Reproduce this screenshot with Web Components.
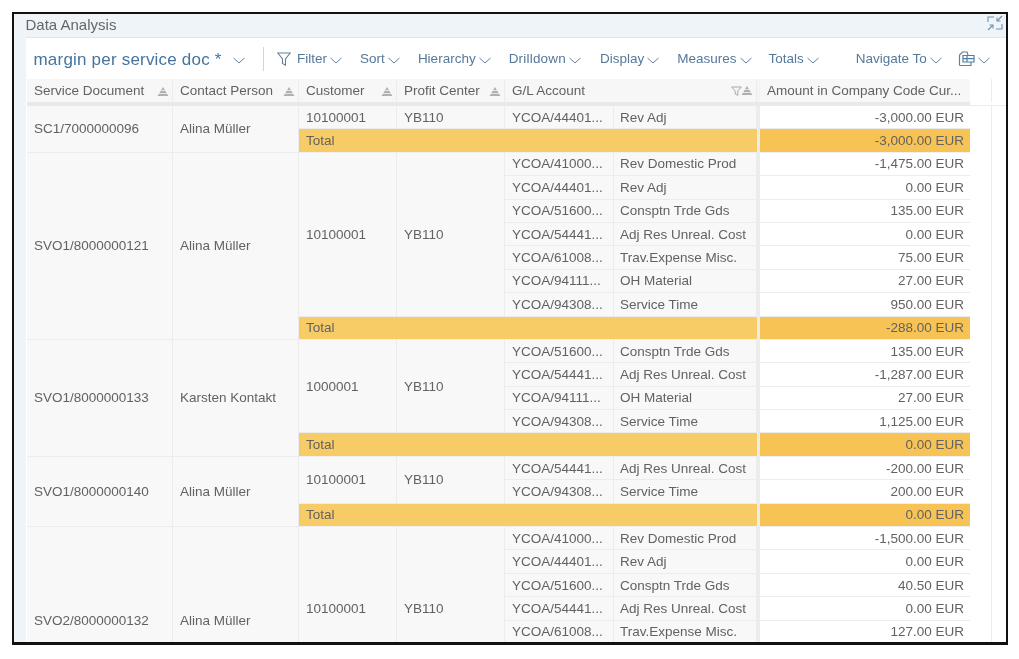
<!DOCTYPE html>
<html>
<head>
<meta charset="utf-8">
<title>Data Analysis</title>
<style>
  html, body { margin: 0; height: 100%; background: #fff; }
  body { font-family: "Liberation Sans", Arial, sans-serif; }
</style>
</head>
<body>
<analysis-frame>
  <panel-title slot="title">Data Analysis</panel-title>
  <analysis-toolbar slot="toolbar"></analysis-toolbar>
  <data-grid slot="content"></data-grid>
</analysis-frame>

<script>
const chevron = `<svg width="12" height="7" viewBox="0 0 12 7" fill="none" stroke="#667f9a" stroke-width="1"><path d="M.5 1l5.500 5L11.500 1"/></svg>`;

const frameTemplate = document.createElement('template');
frameTemplate.innerHTML = `
  <style>
    :host {
      display: block;
      width: 996px;
      height: 633px;
      margin: 12px 0 0 12px;
      box-sizing: border-box;
      border: 2.500px solid #111;
      border-bottom-width: 3px;
      background: #eff4f9;
      overflow: hidden;
    }
    .inner { filter: blur(.35px); height: 100%; }
    .card {
      margin-left: 12px;
      background: #fff;
      border-top: 1px solid #dde6ee;
      display: flex;
      flex-direction: column;
    }
  </style>
  <div class="inner">
    <slot name="title"></slot>
    <div class="card">
      <slot name="toolbar"></slot>
      <slot name="content"></slot>
    </div>
  </div>
`;

class AnalysisFrame extends HTMLElement {
  constructor() {
    super();
    this.attachShadow({ mode: 'open' }).appendChild(frameTemplate.content.cloneNode(true));
  }
}

const titleTemplate = document.createElement('template');
titleTemplate.innerHTML = `
  <style>
    :host {
      display: flex;
      justify-content: space-between;
      box-sizing: border-box;
      height: 23px;
      padding: 0 3px 0 11.500px;
      font-size: 15px;
      line-height: 17px;
      color: #666;
    }
    .text { padding-top: 1.500px; }
    svg { display: block; margin-top: 1px; }
  </style>
  <span class="text"><slot></slot></span>
  <svg width="16" height="16" viewBox="0 0 16 16" fill="none" stroke="#6f93b2" stroke-width="1.100">
    <path d="M1 7V2h6M15 9v5H9"/>
    <path d="M15 1l-5 5M10 2.500V6h3.500M1 15l5-5M6 13.500V10H2.500"/>
  </svg>
`;

class PanelTitle extends HTMLElement {
  constructor() {
    super();
    this.attachShadow({ mode: 'open' }).appendChild(titleTemplate.content.cloneNode(true));
  }
}

const buttonTemplate = document.createElement('template');
buttonTemplate.innerHTML = `
  <style>
    :host {
      display: inline-flex;
      align-items: center;
      gap: 3px;
      font-size: 13.500px;
      color: #56789a;
      white-space: nowrap;
    }
    svg { margin-top: 3px; }
  </style>
  <slot></slot>${chevron}
`;

class ToolbarButton extends HTMLElement {
  constructor() {
    super();
    this.attachShadow({ mode: 'open' }).appendChild(buttonTemplate.content.cloneNode(true));
  }
}

const toolbarTemplate = document.createElement('template');
toolbarTemplate.innerHTML = `
  <style>
    :host {
      display: flex;
      align-items: center;
      height: 41px;
      padding: 0 11px 0 7.500px;
      box-sizing: border-box;
    }
    .name {
      font-size: 17px;
      letter-spacing: .2px;
      color: #44749f;
      white-space: nowrap;
      margin-top: 3px;
    }
    .name-arrow { margin: 3px 18px 0 11px; display: block; flex: none; }
    .sep { width: 1.500px; height: 24px; background: #cfd6dc; margin-right: 13px; flex: none; }
    .funnel { margin-right: 6px; display: block; flex: none; }
    toolbar-button { margin-right: 18px; }
    .drill { letter-spacing: .2px; margin-right: 19px; }
    .measures { margin-right: 17px; }
    .totals { margin-right: 37px; }
    .nav { margin-right: 16px; }
    .last { margin: 0; }
  </style>
  <span class="name">margin per service doc *</span>
  <svg class="name-arrow" width="12" height="7" viewBox="0 0 12 7" fill="none" stroke="#667f9a"><path d="M.5 1l5.500 5L11.500 1"/></svg>
  <span class="sep"></span>
  <svg class="funnel" width="14" height="14" viewBox="0 0 14 14" fill="none" stroke="#667f9a" stroke-width="1.100"><path d="M.8 1h12.400L8.500 7v6.200l-3-1.700V7z"/></svg>
  <toolbar-button>Filter</toolbar-button>
  <toolbar-button>Sort</toolbar-button>
  <toolbar-button>Hierarchy</toolbar-button>
  <toolbar-button class="drill">Drilldown</toolbar-button>
  <toolbar-button>Display</toolbar-button>
  <toolbar-button class="measures">Measures</toolbar-button>
  <toolbar-button class="totals">Totals</toolbar-button>
  <toolbar-button class="nav">Navigate To</toolbar-button>
  <toolbar-button class="last"><svg width="17" height="16" viewBox="0 0 17 16" fill="none" stroke-width="1.200" style="display:block;margin-top:0"><path d="M1.500 14.500V4L4.500 1H9l1 3M1.500 14.500H13V11" stroke="#6a7f9a"/><path d="M5 4.500h11v6.500H5zM5 7.700h11M9 4.500V11" stroke="#4f7ea6"/></svg></toolbar-button>
`;

class AnalysisToolbar extends HTMLElement {
  constructor() {
    super();
    this.attachShadow({ mode: 'open' }).appendChild(toolbarTemplate.content.cloneNode(true));
  }
}

const sections = [
  { doc: 'SC1/7000000096', person: 'Alina Müller', customer: '10100001', lines: [
    ['YCOA/44401...', 'Rev Adj', '-3,000.00 EUR'],
  ], total: '-3,000.00 EUR' },
  { doc: 'SVO1/8000000121', person: 'Alina Müller', customer: '10100001', lines: [
    ['YCOA/41000...', 'Rev Domestic Prod', '-1,475.00 EUR'],
    ['YCOA/44401...', 'Rev Adj', '0.00 EUR'],
    ['YCOA/51600...', 'Consptn Trde Gds', '135.00 EUR'],
    ['YCOA/54441...', 'Adj Res Unreal. Cost', '0.00 EUR'],
    ['YCOA/61008...', 'Trav.Expense Misc.', '75.00 EUR'],
    ['YCOA/94111...', 'OH Material', '27.00 EUR'],
    ['YCOA/94308...', 'Service Time', '950.00 EUR'],
  ], total: '-288.00 EUR' },
  { doc: 'SVO1/8000000133', person: 'Karsten Kontakt', customer: '1000001', lines: [
    ['YCOA/51600...', 'Consptn Trde Gds', '135.00 EUR'],
    ['YCOA/54441...', 'Adj Res Unreal. Cost', '-1,287.00 EUR'],
    ['YCOA/94111...', 'OH Material', '27.00 EUR'],
    ['YCOA/94308...', 'Service Time', '1,125.00 EUR'],
  ], total: '0.00 EUR' },
  { doc: 'SVO1/8000000140', person: 'Alina Müller', customer: '10100001', lines: [
    ['YCOA/54441...', 'Adj Res Unreal. Cost', '-200.00 EUR'],
    ['YCOA/94308...', 'Service Time', '200.00 EUR'],
  ], total: '0.00 EUR' },
  // the last document runs past the bottom of the panel, 2 of its lines and the total are cut off
  { doc: 'SVO2/8000000132', person: 'Alina Müller', customer: '10100001', hidden: 2, lines: [
    ['YCOA/41000...', 'Rev Domestic Prod', '-1,500.00 EUR'],
    ['YCOA/44401...', 'Rev Adj', '0.00 EUR'],
    ['YCOA/51600...', 'Consptn Trde Gds', '40.50 EUR'],
    ['YCOA/54441...', 'Adj Res Unreal. Cost', '0.00 EUR'],
    ['YCOA/61008...', 'Trav.Expense Misc.', '127.00 EUR'],
  ] },
];

const stack = (x) => `<path transform="translate(${x} 0)" d="M6 0l1.800 3H4.200zM3.700 3.700h4.600l1.300 2.300H2.400zM2 6.700h8L11.500 9H.5z" fill="#b0b0b0"/>`;
const sortIcon = `<svg class="sort" width="12" height="9" viewBox="0 0 12 9">${stack(0)}</svg>`;
const filterSortIcon = `<svg class="sort" width="22" height="10" viewBox="0 0 22 10"><path d="M.7 1h9.600L6.800 5v4.300L4.200 8V5z" fill="none" stroke="#a8a8a8"/>${stack(10)}</svg>`;

const gridTemplate = document.createElement('template');
gridTemplate.innerHTML = `
  <style>
    :host {
      display: block;
      height: 570px;
      margin-left: 1px;
      overflow: hidden;
      font-size: 13.500px;
      color: #626262;
    }
    .grid {
      display: grid;
      grid-template-columns: 146px 126px 98px 108px 109px 143px 3px 210px 21px 1fr;
      grid-template-rows: 23px 4px;
      grid-auto-rows: 23.400px;
    }
    .cell {
      display: flex;
      align-items: center;
      min-width: 0;
      padding: 0 6px 0 7px;
      box-sizing: border-box;
      background: #f8f8f8;
      border-right: 1px solid #ececec;
      border-bottom: 1px solid #ececec;
      white-space: nowrap;
      overflow: hidden;
    }
    .desc { padding-left: 6px; }
    .head { background: #f7f7f7; justify-content: space-between; border-bottom: 0; }
    .sort { flex: none; margin: 1px -3px 0 0; }
    .band { background: #e9e9e9; }
    .amount { background: #fff; justify-content: flex-end; border-right: 0; }
    .head.amount { background: #f7f7f7; justify-content: flex-start; }
    .total { background: #f7cb66; border-right: 0; border-color: #f0f0f0; }
    .total-amount { background: #f7c354; border-right: 0; border-color: #f0f0f0; }
    .gap { background: #ececec; }
    .head-gap { background: #f4f4f4; }
    .rest { background: #fff; }
    .rest-line { background: #fff; border-bottom: 1px solid #ececec; }
    .rest-end { background: #fff; border-left: 1px solid #ececec; }
  </style>
  <div class="grid"></div>
`;

class DataGrid extends HTMLElement {
  constructor() {
    super();
    this.attachShadow({ mode: 'open' }).appendChild(gridTemplate.content.cloneNode(true));
    this.$grid = this.shadowRoot.querySelector('.grid');
    this.renderHead();
    this.renderBody();
  }

  add(className, text, row, column, rowSpan, columnSpan) {
    const cell = document.createElement('div');
    cell.className = className;
    if (text) {
      cell.textContent = text;
    }
    cell.style.gridRow = `${row} / span ${rowSpan || 1}`;
    cell.style.gridColumn = `${column} / span ${columnSpan || 1}`;
    this.$grid.appendChild(cell);
    return cell;
  }

  renderHead() {
    const titles = ['Service Document', 'Contact Person', 'Customer', 'Profit Center'];
    titles.forEach((title, i) => {
      this.add('cell head', title, 1, i + 1).insertAdjacentHTML('beforeend', sortIcon);
    });
    this.add('cell head', 'G/L Account', 1, 5, 1, 2).insertAdjacentHTML('beforeend', filterSortIcon);
    this.add('head-gap', '', 1, 7);
    this.add('cell head amount', 'Amount in Company Code Cur...', 1, 8);
    this.add('rest', '', 1, 9);
    this.add('rest-end', '', 1, 10);
    this.add('band', '', 2, 1, 1, 8);
    this.add('rest-line', '', 2, 9, 1, 2);
  }

  renderBody() {
    let row = 3;
    sections.forEach((section) => {
      const count = section.lines.length + (section.hidden || 0);
      this.add('cell', section.doc, row, 1, count + 1);
      this.add('cell', section.person, row, 2, count + 1);
      this.add('cell', section.customer, row, 3, count);
      this.add('cell', 'YB110', row, 4, count);
      section.lines.forEach((line, i) => {
        this.add('cell', line[0], row + i, 5);
        this.add('cell desc', line[1], row + i, 6);
        this.add('gap', '', row + i, 7);
        this.add('cell amount', line[2], row + i, 8);
      });
      if (section.total) {
        this.add('cell total', 'Total', row + count, 3, 1, 4);
        this.add('gap', '', row + count, 7);
        this.add('cell total-amount amount', section.total, row + count, 8);
      }
      row += count + 1;
    });
    this.add('rest-end', '', 3, 10, row);
  }
}

customElements.define('analysis-frame', AnalysisFrame);
customElements.define('panel-title', PanelTitle);
customElements.define('toolbar-button', ToolbarButton);
customElements.define('analysis-toolbar', AnalysisToolbar);
customElements.define('data-grid', DataGrid);
</script>
</body>
</html>
